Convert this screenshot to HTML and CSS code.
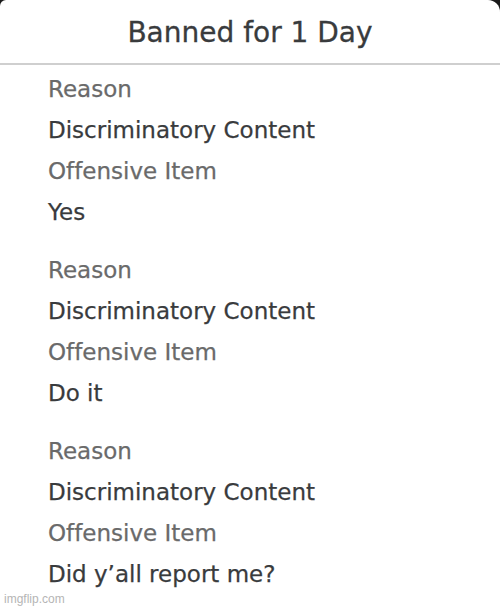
FILE: index.html
```html
<!DOCTYPE html>
<html>
<head>
<meta charset="utf-8">
<link rel="stylesheet" href="styles.css">
</head>
<body>
<div class="card">
  <div class="header"><h1 class="title">Banned for 1 Day</h1></div>
  <div class="content">
    <div class="group">
      <div class="row label">Reason</div>
      <div class="row value">Discriminatory Content</div>
      <div class="row label">Offensive Item</div>
      <div class="row value">Yes</div>
    </div>
    <div class="group">
      <div class="row label">Reason</div>
      <div class="row value">Discriminatory Content</div>
      <div class="row label">Offensive Item</div>
      <div class="row value">Do it</div>
    </div>
    <div class="group">
      <div class="row label">Reason</div>
      <div class="row value">Discriminatory Content</div>
      <div class="row label">Offensive Item</div>
      <div class="row value">Did y’all report me?</div>
    </div>
  </div>
  <div class="watermark">imgflip.com</div>
</div>
</body>
</html>
```
FILE: styles.css
```css
html, body {
  margin: 0;
  padding: 0;
  background: #1a1a1a;
}
body {
  width: 500px;
  height: 608px;
  overflow: hidden;
}
.card {
  position: relative;
  width: 500px;
  height: 608px;
  background: #ffffff;
  border-top-left-radius: 6px;
  border-top-right-radius: 12px;
  font-family: "DejaVu Sans", "Liberation Sans", sans-serif;
  font-variant-ligatures: none;
}
.header {
  height: 63px;
  border-bottom: 2px solid #cfcfcf;
  display: flex;
  align-items: center;
  justify-content: center;
}
.title {
  margin: 0;
  padding-top: 2px;
  font-size: 28px;
  font-weight: normal;
  color: #393b3d;
  -webkit-text-stroke: 0.3px #393b3d;
}
.content {
  padding: 4px 0 0 48px;
  display: flex;
  flex-direction: column;
  gap: 17px;
}
.row {
  height: 41px;
  line-height: 41px;
  font-size: 23px;
  white-space: nowrap;
}
.label {
  color: #6a6a6a;
  -webkit-text-stroke: 0.25px #6a6a6a;
}
.value {
  color: #393b3d;
  -webkit-text-stroke: 0.25px #393b3d;
}
.watermark {
  position: absolute;
  left: 4px;
  bottom: 2px;
  font-family: "Liberation Sans", Arial, sans-serif;
  font-size: 12px;
  color: #b5b5b5;
}
```
